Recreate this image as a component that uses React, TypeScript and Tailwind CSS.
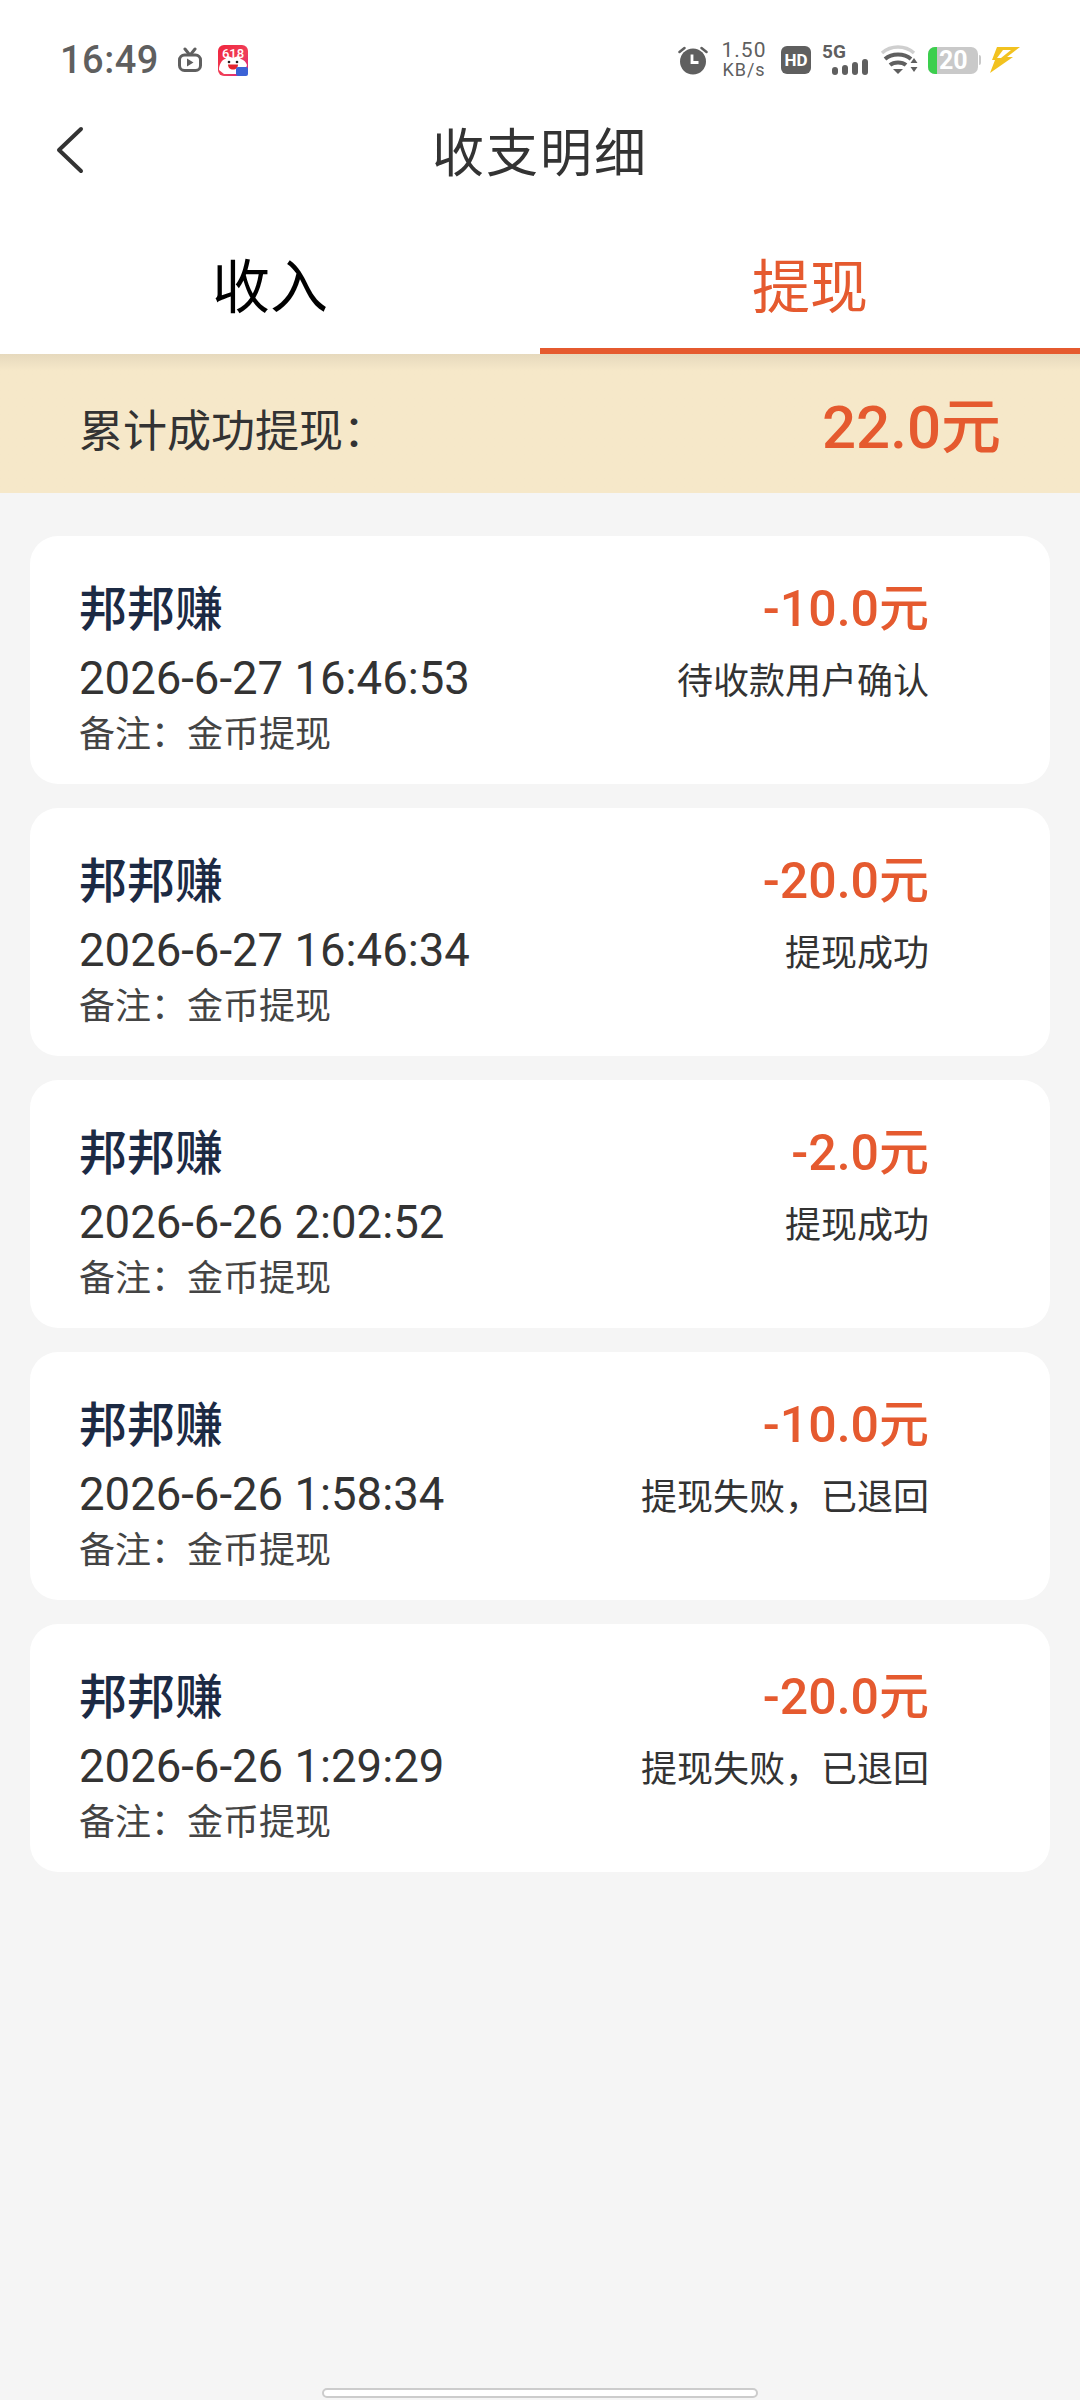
import React from "react";

const cjk = { fontFamily: '"Noto Sans CJK SC", sans-serif' };
const num = { fontFamily: 'Roboto, "Noto Sans CJK SC", sans-serif' };

const records = [
  { date: "2026-6-27 16:46:53", amount: "-10.0元", status: "待收款用户确认" },
  { date: "2026-6-27 16:46:34", amount: "-20.0元", status: "提现成功" },
  { date: "2026-6-26 2:02:52", amount: "-2.0元", status: "提现成功" },
  { date: "2026-6-26 1:58:34", amount: "-10.0元", status: "提现失败，已退回" },
  { date: "2026-6-26 1:29:29", amount: "-20.0元", status: "提现失败，已退回" },
];

const TvIcon = () => (
  <svg width="26" height="26" viewBox="0 0 26 26" fill="none">
    <path d="M8 2l4 5M18 2l-4 5" stroke="#5f5f5f" strokeWidth="3" strokeLinecap="round" />
    <rect x="2.5" y="8" width="21" height="15.5" rx="5" stroke="#5f5f5f" strokeWidth="3" />
    <path d="M10 11.5l6.5 4-6.5 4z" fill="#5f5f5f" />
  </svg>
);

const AppIcon = () => (
  <svg width="30" height="31" viewBox="0 0 30 31">
    <defs>
      <linearGradient id="app618" x1="0" y1="0" x2="1" y2="1">
        <stop offset="0" stopColor="#f0243c" />
        <stop offset="0.6" stopColor="#f0405a" />
        <stop offset="1" stopColor="#d3178f" />
      </linearGradient>
    </defs>
    <rect width="30" height="31" rx="6" fill="url(#app618)" />
    <text x="15" y="13" textAnchor="middle" fontSize="13" fontFamily="Roboto" fontWeight="500" fill="#fff">618</text>
    <path d="M1 25c0-6 3-10 6-11l3-3 5 2 5-2 3 3c3 1 5 3 6 6l-3 9H6z" fill="#fff" />
    <circle cx="11" cy="17" r="1.3" fill="#222" />
    <circle cx="19" cy="17" r="1.3" fill="#222" />
    <path d="M10 19.500h10c0 3-2 5-5 5s-5-2-5-5z" fill="#e3232e" />
    <rect x="18" y="22" width="12" height="9" rx="2" fill="#3b62d6" />
  </svg>
);

const AlarmIcon = () => (
  <svg width="30" height="30" viewBox="0 0 30 30">
    <circle cx="15" cy="16.500" r="13" fill="#5f5f5f" />
    <path d="M14 9.500v8h6.500" stroke="#fff" strokeWidth="2.800" fill="none" />
    <path d="M1.500 7l5-4M28.500 7l-5-4" stroke="#5f5f5f" strokeWidth="2.500" strokeLinecap="round" />
  </svg>
);

const SignalIcon = () => (
  <svg width="36" height="16" viewBox="0 0 36 16" fill="#5f5f5f">
    <rect x="0" y="8" width="6" height="8" rx="3" />
    <rect x="10" y="6" width="6" height="10" rx="3" />
    <rect x="20" y="3" width="6" height="13" rx="3" />
    <rect x="30" y="0" width="6" height="16" rx="3" />
  </svg>
);

const WifiIcon = () => (
  <svg width="38" height="30" viewBox="0 0 38 30" fill="none">
    <path d="M2 8C11 0 25 0 34 8" stroke="#cfcfcf" strokeWidth="3.500" />
    <path d="M5 14c7-6 19-6 26 0" stroke="#5f5f5f" strokeWidth="4" />
    <path d="M10 20c4-3.500 12-3.500 16 0" stroke="#5f5f5f" strokeWidth="4" />
    <path d="M13 24h10l-5 5z" fill="#5f5f5f" />
    <path d="M34 13l3.500 5h-7zM34 27l-3.500-5h7z" fill="#5f5f5f" />
  </svg>
);

const BoltIcon = () => (
  <svg width="30" height="26" viewBox="0 0 30 26">
    <path d="M7 0h23L17 10h6L0 26 5 13H2z" fill="#f2c21f" />
    <path d="M13 3L7 11h4l10-8z" fill="#fff" />
  </svg>
);

const StatusBar = () => (
  <div className="mt-[30px] flex h-[58px] items-center justify-between px-[60px] pt-[2px]">
    <div className="flex items-center">
      <span className="text-[38px] leading-none font-medium tracking-[0.5px] text-[#5f5f5f]" style={num}>
        16:49
      </span>
      <span className="ml-[18px] flex"><TvIcon /></span>
      <span className="ml-[15px] flex"><AppIcon /></span>
    </div>
    <div className="flex items-center">
      <AlarmIcon />
      <div className="ml-[13px] flex w-[46px] flex-col items-center text-[#5f5f5f]" style={num}>
        <span className="text-[21px] leading-[20px] tracking-[1px]">1.50</span>
        <span className="text-[18px] leading-[20px] tracking-[1px]">KB/s</span>
      </div>
      <span className="ml-[14px] flex h-[28px] w-[30px] items-center justify-center rounded-[6px] bg-[#5f5f5f] text-[17px] leading-none font-bold text-white" style={num}>
        HD
      </span>
      <div className="ml-[11px] flex w-[46px] flex-col">
        <span className="text-[19px] leading-[14px] font-bold text-[#5f5f5f]" style={num}>5G</span>
        <span className="ml-[10px] flex"><SignalIcon /></span>
      </div>
      <span className="ml-[12px] flex"><WifiIcon /></span>
      <div className="ml-[10px] flex h-[27px] w-[50px] items-center overflow-hidden rounded-[7px] bg-[#c9c9c9]">
        <div className="h-full w-[9px] bg-[#3ccf4e]" />
        <span className="ml-[2px] text-[25px] leading-none font-bold text-white" style={num}>20</span>
      </div>
      <div className="ml-[1px] h-[10px] w-[2px] rounded-r bg-[#c9c9c9]" />
      <span className="ml-[9px] flex"><BoltIcon /></span>
    </div>
  </div>
);

const Card = ({ date, amount, status }: { date: string; amount: string; status: string }) => (
  <div className="flex h-[248px] justify-between rounded-[28px] bg-white pt-[36px] pr-[121px] pl-[49px]">
    <div>
      <div className="text-[48px] leading-[66px] font-medium text-[#1c2a44]" style={cjk}>邦邦赚</div>
      <div className="mt-[15px] text-[45.5px] leading-[52px] text-[#333333]" style={num}>{date}</div>
      <div className="mt-[1px] text-[36px] leading-[50px] text-[#444444]" style={cjk}>备注：金币提现</div>
    </div>
    <div className="flex flex-col items-end">
      <div className="pt-[4px] text-[50px] leading-[66px] font-medium text-[#e55a2f]" style={num}>{amount}</div>
      <div className="mt-[10px] pl-[1px] text-[36px] leading-[52px] text-[#333333]" style={cjk}>{status}</div>
    </div>
  </div>
);

export default function App() {
  return (
    <div className="relative flex h-[2400px] w-[1080px] flex-col overflow-hidden bg-[#f5f5f5]" style={cjk}>
      <div className="bg-white">
        <StatusBar />
        <div className="relative flex h-[124px] items-center justify-center">
          <svg className="absolute top-[37px] left-[55px]" width="30" height="50" viewBox="0 0 30 50" fill="none">
            <path d="M26 4L4 25l22 21" stroke="#333333" strokeWidth="4" strokeLinecap="round" strokeLinejoin="round" />
          </svg>
          <span className="text-[52px] leading-none tracking-[2px] text-[#333333]">收支明细</span>
        </div>
        <div className="flex h-[142px]">
          <div className="flex flex-1 items-center justify-center text-[58px] leading-none text-black">收入</div>
          <div className="flex flex-1 items-center justify-center border-b-[6px] border-[#e55a2f] pt-[6px] text-[58px] leading-none text-[#e55a2f]">提现</div>
        </div>
      </div>
      <div className="flex h-[139px] items-center justify-between bg-gradient-to-b from-[#e6d9bd] from-0% to-[#f6e8c9] to-[12%] pt-[8px] pr-[79px] pl-[79px]">
        <span className="text-[44px] leading-none text-[#333333]">累计成功提现：</span>
        <span className="text-[60px] leading-none font-medium text-[#e55a2f]" style={num}>22.0元</span>
      </div>
      <div className="flex flex-col gap-[24px] px-[30px] pt-[43px]">
        {records.map((r) => (
          <Card key={r.date} {...r} />
        ))}
      </div>
      <div className="absolute bottom-[2px] left-[322px] h-[10px] w-[436px] rounded-full border-2 border-[#cccccc] bg-white" />
    </div>
  );
}
